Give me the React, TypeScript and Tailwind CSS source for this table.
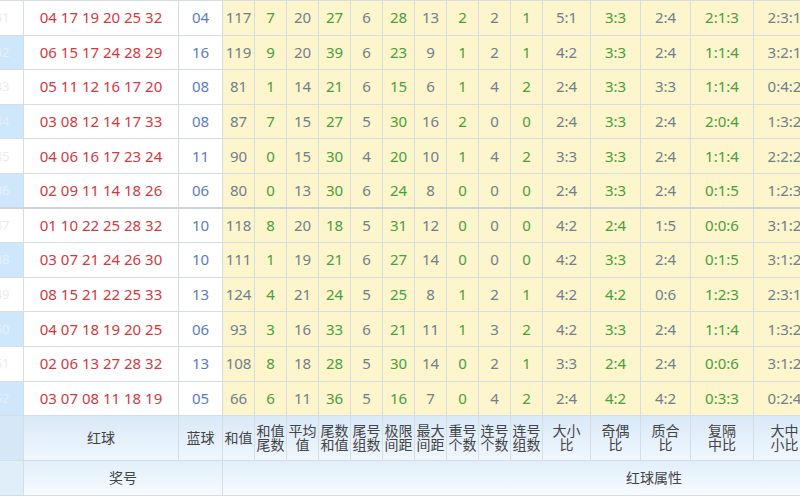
import React from "react";

type Row = {
  period: string;
  red: string;
  blue: string;
  stats: string[];
  ratios: string[];
};

const rows: Row[] = [
  { period: "2019041", red: "04 17 19 20 25 32", blue: "04", stats: ["117", "7", "20", "27", "6", "28", "13", "2", "2", "1"], ratios: ["5:1", "3:3", "2:4", "2:1:3", "2:3:1"] },
  { period: "2019042", red: "06 15 17 24 28 29", blue: "16", stats: ["119", "9", "20", "39", "6", "23", "9", "1", "2", "1"], ratios: ["4:2", "3:3", "2:4", "1:1:4", "3:2:1"] },
  { period: "2019043", red: "05 11 12 16 17 20", blue: "08", stats: ["81", "1", "14", "21", "6", "15", "6", "1", "4", "2"], ratios: ["2:4", "3:3", "3:3", "1:1:4", "0:4:2"] },
  { period: "2019044", red: "03 08 12 14 17 33", blue: "08", stats: ["87", "7", "15", "27", "5", "30", "16", "2", "0", "0"], ratios: ["2:4", "3:3", "2:4", "2:0:4", "1:3:2"] },
  { period: "2019045", red: "04 06 16 17 23 24", blue: "11", stats: ["90", "0", "15", "30", "4", "20", "10", "1", "4", "2"], ratios: ["3:3", "3:3", "2:4", "1:1:4", "2:2:2"] },
  { period: "2019046", red: "02 09 11 14 18 26", blue: "06", stats: ["80", "0", "13", "30", "6", "24", "8", "0", "0", "0"], ratios: ["2:4", "3:3", "2:4", "0:1:5", "1:2:3"] },
  { period: "2019047", red: "01 10 22 25 28 32", blue: "10", stats: ["118", "8", "20", "18", "5", "31", "12", "0", "0", "0"], ratios: ["4:2", "2:4", "1:5", "0:0:6", "3:1:2"] },
  { period: "2019048", red: "03 07 21 24 26 30", blue: "10", stats: ["111", "1", "19", "21", "6", "27", "14", "0", "0", "0"], ratios: ["4:2", "3:3", "2:4", "0:1:5", "3:1:2"] },
  { period: "2019049", red: "08 15 21 22 25 33", blue: "13", stats: ["124", "4", "21", "24", "5", "25", "8", "1", "2", "1"], ratios: ["4:2", "4:2", "0:6", "1:2:3", "2:3:1"] },
  { period: "2019050", red: "04 07 18 19 20 25", blue: "06", stats: ["93", "3", "16", "33", "6", "21", "11", "1", "3", "2"], ratios: ["4:2", "3:3", "2:4", "1:1:4", "1:3:2"] },
  { period: "2019051", red: "02 06 13 27 28 32", blue: "13", stats: ["108", "8", "18", "28", "5", "30", "14", "0", "2", "1"], ratios: ["3:3", "2:4", "2:4", "0:0:6", "3:1:2"] },
  { period: "2019052", red: "03 07 08 11 18 19", blue: "05", stats: ["66", "6", "11", "36", "5", "16", "7", "0", "4", "2"], ratios: ["2:4", "4:2", "4:2", "0:3:3", "0:2:4"] },
];

const headers: string[][] = [
  ["和值"],
  ["和值", "尾数"],
  ["平均", "值"],
  ["尾数", "和值"],
  ["尾号", "组数"],
  ["极限", "间距"],
  ["最大", "间距"],
  ["重号", "个数"],
  ["连号", "个数"],
  ["连号", "组数"],
  ["大小", "比"],
  ["奇偶", "比"],
  ["质合", "比"],
  ["复隔", "中比"],
  ["大中", "小比"],
];

const widths = [80, 155, 44, 32, 32, 32, 32, 32, 32, 32, 32, 32, 32, 48, 50, 50, 63, 62, 90, 90, 90];

const cell = "border border-[#d6dde3] text-center p-0 leading-none whitespace-nowrap";
const gray = "text-[#6f7f8e]";
const green = "text-[#45a03f]";

const App = () => {
  return (
    <div className="w-[800px] h-[500px] overflow-hidden bg-white font-['Noto_Sans','Noto_Sans_CJK_SC',sans-serif]">
      <table className="table-fixed border-collapse ml-[-57px] text-[15px]" style={{ width: widths.reduce((a, b) => a + b, 0) }}>
        <colgroup>
          {widths.map((w, i) => (
            <col key={i} style={{ width: w }} />
          ))}
        </colgroup>
        <tbody>
          {rows.map((r, i) => (
            <tr key={r.period} className={i === 6 ? "h-[34.6px] border-t-2 border-t-[#cdd3d8]" : "h-[34.6px]"}>
              <td className={`${cell} text-[13px] ${i % 2 === 1 ? "bg-[#cfe7fa] text-[#e4f1fc]" : "bg-white text-[#ececec]"}`}>
                {r.period}
              </td>
              <td className={`${cell} bg-white text-[#cf3a41]`}>{r.red}</td>
              <td className={`${cell} bg-white text-[#5c7cbd]`}>{r.blue}</td>
              {[...r.stats, ...r.ratios].map((v, j) => (
                <td key={j} className={`${cell} bg-[#fdf5cc] ${j % 2 === 0 ? gray : green}`}>
                  {v}
                </td>
              ))}
              <td className={`${cell} bg-[#fdf5cc] ${green}`}>1:2:3</td>
              <td className={`${cell} bg-[#fdf5cc] ${gray}`}>3</td>
              <td className={`${cell} bg-[#fdf5cc] ${green}`}>2</td>
            </tr>
          ))}
          <tr className="h-[45px] text-[14px] text-[#444] bg-linear-to-b from-[#d9e9f8] to-[#f1f7fd]">
            <td className={`${cell} bg-[#d6e8f8]`}></td>
            <td className={cell}>红球</td>
            <td className={cell}>蓝球</td>
            {headers.map((h, k) => (
              <td key={k} className={`${cell} leading-[21px]`}>
                {h.map((t) => (
                  <div key={t}>{t}</div>
                ))}
              </td>
            ))}
            <td className={cell}>012路</td>
            <td className={cell}>AC值</td>
            <td className={cell}>跨度</td>
          </tr>
          <tr className="h-[35px] text-[14px] text-[#444] bg-linear-to-b from-[#e2effb] to-[#f7fbff]">
            <td className={`${cell} bg-[#e0eefa]`}></td>
            <td className={cell} colSpan={2}>
              奖号
            </td>
            <td className={cell} colSpan={18}>
              红球属性
            </td>
          </tr>
        </tbody>
      </table>
    </div>
  );
};

export default App;
